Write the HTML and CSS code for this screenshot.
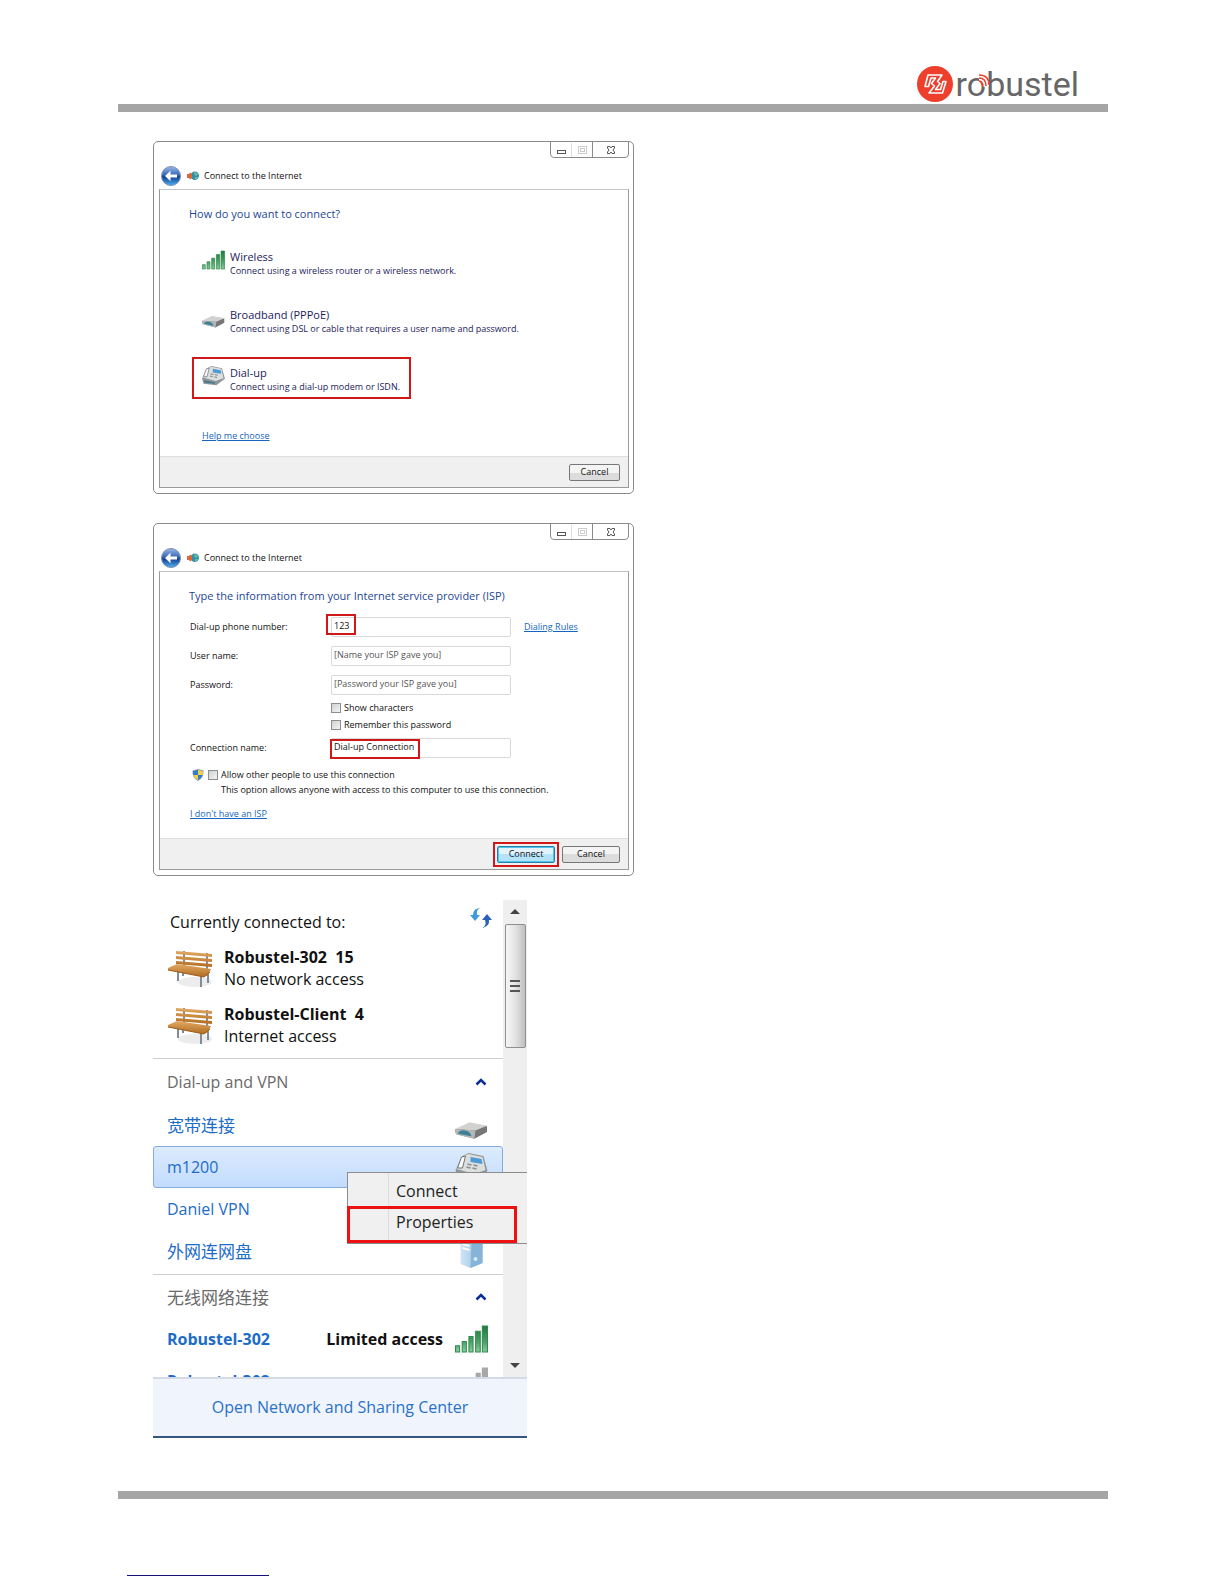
FILE: index.html
```html
<!DOCTYPE html>
<html lang="en">
<head>
  <meta charset="utf-8">
  <title>Connect to the Internet</title>
  <link rel="stylesheet" href="styles.css">
</head>
<body>
  <!-- shared icons -->
  <svg class="sprite" aria-hidden="true">
    <defs>
      <linearGradient id="blue" x1="0" y1="0" x2="0" y2="1">
        <stop offset="0" stop-color="#9db9e6"/>
        <stop offset=".45" stop-color="#3565b8"/>
        <stop offset=".55" stop-color="#123f96"/>
        <stop offset="1" stop-color="#4fb4ee"/>
      </linearGradient>
      <linearGradient id="green" x1="0" y1="0" x2="0" y2="1">
        <stop offset="0" stop-color="#1f7a3c"/>
        <stop offset=".6" stop-color="#4ba066"/>
        <stop offset="1" stop-color="#8ccb9c"/>
      </linearGradient>
      <linearGradient id="wood" x1="0" y1="0" x2="0" y2="1">
        <stop offset="0" stop-color="#e2a962"/>
        <stop offset="1" stop-color="#b26c22"/>
      </linearGradient>
      <linearGradient id="glass" x1="0" y1="0" x2="1" y2="0">
        <stop offset="0" stop-color="#cfe6f6"/>
        <stop offset="1" stop-color="#8fbbdc"/>
      </linearGradient>
    </defs>
    <symbol id="back" viewBox="0 0 20 20">
      <circle cx="10" cy="10" r="9.5" fill="url(#blue)" stroke="#7c8fb5" stroke-width="1"/>
      <path d="M4 10 L9.5 4.8 V8.4 H16 V11.6 H9.5 V15.2 Z" fill="#fff"/>
    </symbol>
    <symbol id="globe" viewBox="0 0 12 10">
      <circle cx="7.8" cy="4.8" r="4.2" fill="#2f8fb3"/>
      <path d="M7 1 Q10 1 11 3.5 L9 5 L7.5 3.5 Z M8 6 L11 6 Q10 8.6 8 8.8 Z" fill="#6fc08b"/>
      <path d="M0 3 H2 L3 1.5 L5 3 V7 L3 8.5 L2 7 H0 Z" fill="#d8693a"/>
    </symbol>
    <symbol id="signal" viewBox="0 0 32 26">
      <path d="M.5 19.500h4v6h-4zM7 15.500h4v10h-4zM13.500 10.500h4v15h-4zM20 5.500h4.500v20h-4.500zM26.500 .5h5v25h-5z" fill="url(#green)" stroke="#2f8a4e"/>
    </symbol>
    <symbol id="signal-grey" viewBox="0 0 32 26">
      <path d="M0 19h5v7h-5zM7 15h5v11h-5zM13 10h5v16h-5zM20 5h5v21h-5zM26 0h6v26h-6z" fill="#a8a8a8"/>
    </symbol>
    <symbol id="modem" viewBox="0 0 34 18">
      <path d="M0 8 L15 1 L33 4 V10 L20 17 L1 12 Z" fill="#777"/>
      <path d="M0 7 L15 0 L33 3.500 L21 8.500 Z" fill="#d2d2d0"/>
      <path d="M0 7 L21 8.500 L20 17 L1 12.500 Z" fill="#b4b7b6"/>
      <path d="M3 11 Q5 7.500 10 8.500 Q16 9 17 14.500 L4 12 Z" fill="#3f7f98"/>
    </symbol>
    <symbol id="phone" viewBox="0 0 32 28">
      <path d="M7 3 L13 0 L28 3 L32 18 L20 27 L2 25 L0 17 Z" fill="#8f9699"/>
      <path d="M8 3 L13 1 L27 4 L30 17 L19 21 L1 16 Z" fill="#dcdfde"/>
      <path d="M6 4 L10 3 L7 15 L2 15 Z" fill="#fafafa" stroke="#6d7375" stroke-width="1"/>
      <path d="M15 4 L26 6 L27 11 L15 9 Z" fill="#4a9bd8"/>
      <path d="M12 11 l4 1 M18 12 l4 1 M11 14 l4 1 M17 15 l4 1" stroke="#8b8f91" stroke-width="1.5"/>
      <path d="M3 20 L18 23 L18 25 L3 23 Z" fill="#44768c"/>
    </symbol>
    <symbol id="bench" viewBox="0 0 46 38">
      <ellipse cx="27" cy="32" rx="17" ry="5" fill="#ececec"/>
      <path d="M16 1 V20 M39 3 V24 M10 19 V31 M33 26 V37 M15 19 V26 M40 23 V33" stroke="#7f8d9b" stroke-width="2"/>
      <path d="M8 1 L44 4 V7 L8 4 Z M8 6 L44 9 V12 L8 9 Z M8 11 L44 14 V17 L8 14 Z" fill="url(#wood)"/>
      <path d="M0 18 L9 14 L43 19 L40 25 L36 27 L0 20 Z" fill="url(#wood)"/>
      <path d="M0 20 L36 27 L42 22" stroke="#9a5c1c" stroke-width="1" fill="none"/>
    </symbol>
    <symbol id="server" viewBox="0 0 24 34">
      <path d="M1 3 L12 0 L23 3 V29 L11 34 L1 30 Z" fill="url(#glass)"/>
      <path d="M12 7 L23 3 V29 L11 34 Z" fill="#86b4d8"/>
      <path d="M3 10 L10 12 M3 14 L10 16" stroke="#fff" stroke-width="2"/>
      <circle cx="16" cy="25" r="2" fill="#d5ebf8"/>
    </symbol>
    <symbol id="shield" viewBox="0 0 12 12">
      <path d="M6 0 L11.5 1.5 Q12 9 6 12 Q0 9 .5 1.5 Z" fill="#8c9cab"/>
      <path d="M6 1 V6 H1.2 V2.2 Z M6 6 H10.6 Q9.5 9.5 6 11 Z" fill="#2f7ccc"/>
      <path d="M6 1 V6 H10.8 V2.2 Z M6 6 H1.4 Q2.5 9.5 6 11 Z" fill="#f0cf45"/>
    </symbol>
    <symbol id="captions" viewBox="0 0 79 16">
      <path d="M.5 0 V12 Q.5 15.500 4 15.500 H75 Q78.500 15.500 78.500 12 V0 M42.500 0 V15" fill="none" stroke="#8a8a8a"/>
      <path d="M21.500 1 V15" stroke="#dcdcdc"/>
      <rect x="7.500" y="8.500" width="8" height="3" fill="#fff" stroke="#555"/>
      <rect x="28.500" y="4.500" width="8" height="7" fill="#fff" stroke="#ccc"/>
      <rect x="30.500" y="6.500" width="4" height="3" fill="#fff" stroke="#ccc"/>
      <path d="M57.500 4.500 H60 L61 6 L62 4.500 H64.500 V6 L63 8 L64.500 10 V11.500 H62 L61 10 L60 11.500 H57.500 V10 L59 8 L57.500 6 Z" fill="#fff" stroke="#555"/>
    </symbol>
    <symbol id="chevron" viewBox="0 0 12 8">
      <path d="M1.500 6.500 L6 2 L10.500 6.500" fill="none" stroke="#0b2f96" stroke-width="2.500"/>
    </symbol>
  </svg>

  <div class="page">
    <header class="page-header">
      <div class="logo">
        <svg class="logo-mark" viewBox="0 0 36 36">
          <circle cx="18" cy="18" r="18" fill="#ee3e2c"/>
          <path d="M8 20.500 L11 9 H25 L20.500 15.500 L23 17.500 L18.500 23.500 H23.500 L26 15.500 H29 L25.500 27 H12 L17.500 20 L14.500 17.500 L18.500 12 H14 L11.500 20.500 Z" fill="none" stroke="#fff" stroke-width="1.600" stroke-linejoin="round"/>
        </svg>
        <span class="logo-text">robustel</span>
        <svg class="logo-waves" viewBox="0 0 12 14">
          <path d="M1 1 Q11 1 11 12 L5 13 Q5 8 1 7 Z" fill="#fff"/>
          <path d="M1 7 Q5 7 5 13 M1 4 Q8 4 8 12 M1 1 Q11 1 11 11" fill="none" stroke="#ee3e2c" stroke-width="1.500"/>
        </svg>
      </div>
    </header>

    <main class="content">
      <section class="window">
        <div class="title-bar">
          <svg class="back"><use href="#back"/></svg>
          <svg class="globe"><use href="#globe"/></svg>
          <span>Connect to the Internet</span>
          <svg class="captions"><use href="#captions"/></svg>
        </div>
        <div class="client">
          <div class="client-body">
            <h2>How do you want to connect?</h2>
            <ul class="choices">
              <li class="choice">
                <svg class="choice-icon"><use href="#signal"/></svg>
                <div><h3>Wireless</h3><p>Connect using a wireless router or a wireless network.</p></div>
              </li>
              <li class="choice">
                <svg class="choice-icon low"><use href="#modem"/></svg>
                <div><h3>Broadband (PPPoE)</h3><p>Connect using DSL or cable that requires a user name and password.</p></div>
              </li>
              <li class="choice marked">
                <svg class="choice-icon"><use href="#phone"/></svg>
                <div><h3>Dial-up</h3><p>Connect using a dial-up modem or ISDN.</p></div>
              </li>
            </ul>
            <a class="help" href="#">Help me choose</a>
          </div>
          <div class="buttons">
            <button class="btn small">Cancel</button>
          </div>
        </div>
      </section>

      <section class="window">
        <div class="title-bar">
          <svg class="back"><use href="#back"/></svg>
          <svg class="globe"><use href="#globe"/></svg>
          <span>Connect to the Internet</span>
          <svg class="captions"><use href="#captions"/></svg>
        </div>
        <div class="client">
          <div class="client-body">
            <h2>Type the information from your Internet service provider (ISP)</h2>
            <div class="form">
              <div class="form-row">
                <label for="phone-number">Dial-up phone number:</label>
                <div class="field">
                  <input type="text" id="phone-number" value="123">
                  <span class="mark mark-number"></span>
                </div>
                <a class="rules" href="#">Dialing Rules</a>
              </div>
              <div class="form-row">
                <label for="user">User name:</label>
                <div class="field"><input type="text" id="user" placeholder="[Name your ISP gave you]"></div>
              </div>
              <div class="form-row">
                <label for="pass">Password:</label>
                <div class="field"><input type="text" id="pass" placeholder="[Password your ISP gave you]"></div>
              </div>
              <div class="checks">
                <label class="check"><input type="checkbox">Show characters</label>
                <label class="check"><input type="checkbox">Remember this password</label>
              </div>
              <div class="form-row">
                <label for="conn">Connection name:</label>
                <div class="field">
                  <input type="text" id="conn" value="Dial-up Connection">
                  <span class="mark mark-name"></span>
                </div>
              </div>
              <div class="share">
                <svg class="shield"><use href="#shield"/></svg>
                <label class="check"><input type="checkbox">Allow other people to use this connection</label>
              </div>
              <p class="share-note">This option allows anyone with access to this computer to use this connection.</p>
              <a class="no-isp" href="#">I don't have an ISP</a>
            </div>
          </div>
          <div class="buttons">
            <div class="marked-button"><button class="btn primary">Connect</button></div>
            <button class="btn">Cancel</button>
          </div>
        </div>
      </section>

      <section class="network">
        <div class="network-main">
          <div class="network-list">
            <div class="connected">
              <div class="connected-head">
                <span>Currently connected to:</span>
                <svg class="refresh" viewBox="0 0 22 22">
                  <path d="M11 1 Q6 2 7 8 L10 8 L5 14 L0 8 L3 8 Q3 1 11 1 Z" fill="#3f9bdc"/>
                  <path d="M12 21 Q17 19 15 13 L12 13 L17 7 L22 13 L19 13 Q20 19 12 21 Z" fill="#2b62b8"/>
                </svg>
              </div>
              <div class="connected-item">
                <svg class="bench"><use href="#bench"/></svg>
                <div><strong>Robustel-302&nbsp; 15</strong><p>No network access</p></div>
              </div>
              <div class="connected-item">
                <svg class="bench"><use href="#bench"/></svg>
                <div><strong>Robustel-Client&nbsp; 4</strong><p>Internet access</p></div>
              </div>
            </div>
            <div class="group">
              <div class="group-head"><span>Dial-up and VPN</span><svg class="chevron"><use href="#chevron"/></svg></div>
              <div class="net"><span lang="zh">宽带连接</span><svg class="net-icon low"><use href="#modem"/></svg></div>
              <div class="net selected"><span>m1200</span><svg class="net-icon"><use href="#phone"/></svg>
                <div class="menu">
                  <button class="menu-item">Connect</button>
                  <button class="menu-item marked-item">Properties</button>
                </div>
              </div>
              <div class="net"><span>Daniel VPN</span></div>
              <div class="net"><span lang="zh">外网连网盘</span><svg class="net-icon server"><use href="#server"/></svg></div>
            </div>
            <div class="group">
              <div class="group-head"><span lang="zh">无线网络连接</span><svg class="chevron"><use href="#chevron"/></svg></div>
              <div class="net strong"><span>Robustel-302</span><em>Limited access</em><svg class="net-icon"><use href="#signal"/></svg></div>
              <div class="net strong"><span>Robustel-302</span><svg class="net-icon"><use href="#signal-grey"/></svg></div>
            </div>
          </div>
          <div class="scrollbar">
            <svg class="arrow" viewBox="0 0 10 5"><path d="M0 5 L5 0 L10 5 Z" fill="#444"/></svg>
            <div class="thumb"><span class="grip"></span></div>
            <svg class="arrow last" viewBox="0 0 10 5"><path d="M0 0 L5 5 L10 0 Z" fill="#444"/></svg>
          </div>
        </div>
        <a class="network-footer" href="#">Open Network and Sharing Center</a>
      </section>
    </main>

    <footer class="page-footer"><hr class="footer-line"></footer>
  </div>
</body>
</html>
```

FILE: styles.css
```css
* {
  box-sizing: border-box;
}

body {
  margin: 0;
  background: #fff;
  color: #111;
  font-family: "Open Sans", "Noto Sans", "Noto Sans CJK SC", sans-serif;
  font-size: 9px;
  line-height: 14px;
}

h2, h3, p, ul {
  margin: 0;
  padding: 0;
  font-weight: normal;
}

svg {
  display: block;
  flex: none;
}

a {
  color: #1466c0;
}

button, input {
  font: inherit;
  color: inherit;
}

.sprite {
  position: absolute;
  width: 0;
  height: 0;
}

.page {
  padding: 0 116px 0 118px;
}

.page-header {
  display: flex;
  justify-content: flex-end;
  padding: 66px 29px 2px 0;
  border-bottom: 8px solid #a5a5a5;
}

.logo {
  position: relative;
  display: flex;
  align-items: center;
  gap: 3px;
}

.logo-mark {
  width: 36px;
  height: 36px;
}

.logo-text {
  color: #666;
  font-family: Roboto, sans-serif;
  font-size: 34px;
  line-height: 36px;
}

.logo-waves {
  position: absolute;
  left: 61px;
  top: 8px;
  width: 12px;
  height: 14px;
}

.content {
  padding: 29px 0 0 35px;
}

/* wizard windows */
.window {
  width: 481px;
  margin-bottom: 29px;
  padding: 0 4px 5px 5px;
  border: 1px solid #8a8a8a;
  border-radius: 5px;
}

.window + .network {
  margin-top: -5px;
}

.title-bar {
  position: relative;
  display: flex;
  align-items: center;
  height: 47px;
  padding: 20px 0 0 2px;
}

.back {
  width: 20px;
  height: 20px;
  margin-right: 6px;
}

.globe {
  width: 12px;
  height: 10px;
  margin-right: 5px;
}

.captions {
  position: absolute;
  right: 0;
  top: 0;
  width: 79px;
  height: 16px;
}

.client {
  border: 1px solid #9a9a9a;
  border-top-color: #c4c4c4;
}

.client-body {
  height: 266px;
  padding: 16px 29px 0;
}

.client-body h2 {
  color: #1d4796;
  font-size: 11px;
  line-height: 16px;
}

.choices {
  margin-top: 19px;
  list-style: none;
}

.choice {
  display: flex;
  width: 219px;
  height: 42px;
  margin: 0 0 16px 3px;
  padding: 7px 0 0 8px;
  border: 2px solid transparent;
  color: #1c1c5c;
  white-space: nowrap;
}

.choice.marked {
  border-color: #d01818;
}

.choice-icon {
  width: 23px;
  height: 20px;
  margin-right: 5px;
}

.choice-icon.low {
  margin-top: 4px;
}

.choice h3 {
  font-size: 11px;
  line-height: 14px;
}

.help {
  display: block;
  width: max-content;
  margin: 30px 0 0 13px;
}

.buttons {
  display: flex;
  align-items: center;
  justify-content: flex-end;
  gap: 3px;
  height: 31px;
  padding-right: 8px;
  border-top: 1px solid #dfdfdf;
  background: #f0f0f0;
}

.btn {
  width: 58px;
  height: 17px;
  padding: 0;
  border: 1px solid #777;
  border-radius: 2px;
  background: linear-gradient(#f4f4f4 50%, #dcdcdc 50%);
  line-height: 14px;
}

.btn.small {
  width: 51px;
}

.btn.primary {
  border-color: #2c7fa8;
  background: linear-gradient(#e2f3fc 50%, #b4e2f8 50%);
  box-shadow: inset 0 0 0 1px #4cc5ee;
}

.marked-button {
  display: flex;
  padding: 2px;
  border: 2px solid #d01818;
}

.form {
  margin-top: 13px;
  padding-left: 1px;
}

.form-row {
  display: flex;
  align-items: center;
}

.form-row + .form-row {
  margin-top: 9px;
}

.form-row > label {
  width: 141px;
}

.field {
  position: relative;
  width: 180px;
}

.field input {
  display: block;
  width: 100%;
  height: 20px;
  padding: 0 2px 4px;
  border: 1px solid #d9d9d9;
  border-radius: 2px;
}

.field input::placeholder {
  color: #555;
}

.mark {
  position: absolute;
  border: 2px solid #d01818;
}

.mark-number {
  left: -5px;
  top: -3px;
  width: 30px;
  height: 21px;
}

.mark-name {
  left: -1px;
  top: 1px;
  width: 90px;
  height: 20px;
}

.rules {
  margin-left: 13px;
}

.checks {
  margin: 4px 0 5px 141px;
}

.check {
  display: flex;
  align-items: center;
  height: 17px;
}

.check input {
  appearance: none;
  width: 10px;
  height: 10px;
  margin: 0 3px 0 0;
  border: 1px solid #8e8e8e;
  background: linear-gradient(135deg, #cfd2d4, #f4f4f4);
}

.share {
  display: flex;
  align-items: center;
  margin-top: 8px;
  padding-left: 2px;
}

.shield {
  width: 12px;
  height: 12px;
  margin-right: 4px;
}

.share-note {
  padding-left: 31px;
}

.no-isp {
  display: block;
  width: max-content;
  margin-top: 10px;
}

/* network flyout */
.network {
  width: 374px;
  font-size: 16px;
  line-height: 22px;
}

.network [lang="zh"] {
  font-family: "Noto Sans CJK SC", sans-serif;
  font-size: 17px;
}

.network-main {
  display: flex;
  height: 477px;
  overflow: hidden;
}

.network-list {
  flex: 1;
}

.connected {
  height: 158px;
  padding: 7px 11px 0 15px;
}

.connected-head {
  display: flex;
  justify-content: space-between;
  height: 39px;
  padding: 4px 0 0 2px;
}

.refresh {
  width: 22px;
  height: 22px;
  margin-top: -4px;
}

.connected-item {
  display: flex;
  gap: 10px;
  height: 57px;
}

.bench {
  width: 46px;
  height: 38px;
  margin-top: 4px;
}

.group {
  border-top: 1px solid #cfcfcf;
}

.group + .group {
  margin-top: 2px;
}

.group-head {
  display: flex;
  align-items: center;
  justify-content: space-between;
  height: 45px;
  padding: 0 16px 0 14px;
  color: #6a6a6a;
}

.group + .group .group-head {
  height: 43px;
}

.chevron {
  width: 12px;
  height: 8px;
}

.net {
  position: relative;
  display: flex;
  align-items: center;
  height: 42px;
  padding: 0 15px 0 14px;
  color: #1d6cc8;
}

.net span {
  flex: 1;
}

.net em {
  margin-right: 12px;
  color: #111;
  font-style: normal;
}

.net.strong {
  font-weight: bold;
}

.net-icon {
  width: 33px;
  height: 28px;
}

.net-icon.low {
  margin-top: 12px;
}

.net-icon.server {
  height: 34px;
}

.net.selected {
  padding: 0 14px 0 13px;
  border: 1px solid #84acdd;
  border-radius: 3px;
  background: linear-gradient(#dcebfd, #c2dcfd);
}

.menu {
  position: absolute;
  left: 193px;
  top: 25px;
  z-index: 1;
  width: 180px;
  padding-top: 2px;
  border: 1px solid #8c8c8c;
  border-right: 0;
  background: linear-gradient(90deg, #f0f0f0 40px, #dedede 40px, #dedede 41px, #f0f0f0 41px);
}

.menu-item {
  display: block;
  width: 100%;
  height: 31px;
  padding: 0 0 0 48px;
  border: 0;
  background: none;
  color: #222;
  text-align: left;
}

.menu-item.marked-item {
  width: 170px;
  height: 37px;
  margin-left: -1px;
  padding: 0 0 5px 46px;
  border: 3px solid #ee1111;
}

.scrollbar {
  display: flex;
  flex-direction: column;
  align-items: center;
  width: 24px;
  padding: 9px 0;
  background: #efefef;
}

.arrow {
  width: 10px;
  height: 5px;
}

.arrow.last {
  margin-top: auto;
}

.thumb {
  display: flex;
  align-items: center;
  justify-content: center;
  width: 21px;
  height: 124px;
  margin-top: 10px;
  border: 1px solid #8f8f8f;
  border-radius: 2px;
  background: linear-gradient(90deg, #f6f6f6, #e2e2e2 50%, #bfbfbf);
}

.grip {
  width: 10px;
  height: 12px;
  background: repeating-linear-gradient(#555 0 2px, transparent 2px 5px);
}

.network-footer {
  display: block;
  height: 61px;
  padding-top: 17px;
  border-top: 2px solid #d5dbe6;
  border-bottom: 2px solid #35567f;
  background: #f0f4fc;
  color: #2a72c8;
  text-align: center;
  text-decoration: none;
}

.page-footer {
  margin-top: 53px;
  padding: 76px 0 8px 9px;
  border-top: 8px solid #a5a5a5;
}

.footer-line {
  width: 142px;
  height: 1px;
  margin: 0;
  border: 0;
  background: #14147c;
}
```
